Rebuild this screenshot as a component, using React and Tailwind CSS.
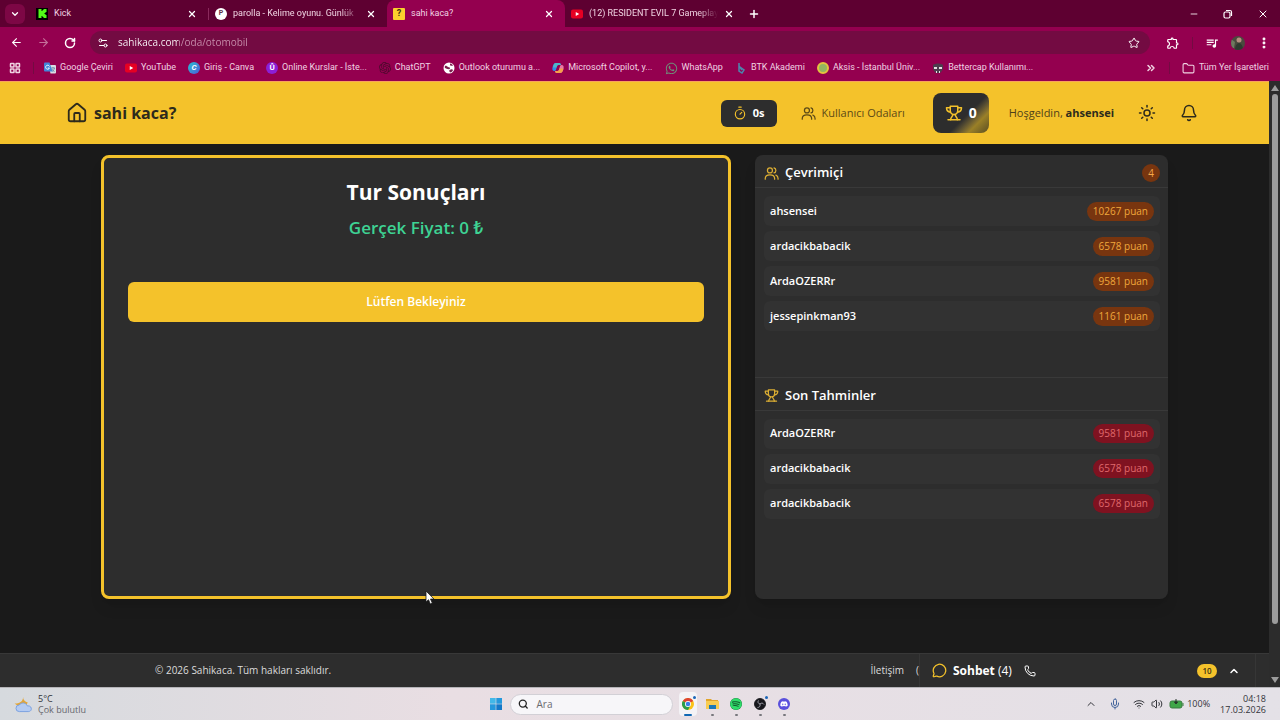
import {
  ArrowLeft, ArrowRight, Bell, ChevronDown, ChevronUp, ChevronsRight, EllipsisVertical, Folder, House,
  LayoutGrid, MessageCircle, Mic, Minus, Phone, Plus, RotateCw, Search, Settings2, Star, Sun, Timer,
  Volume2, Wifi, X,
} from 'lucide-react';
import { FaDiscord, FaSpotify, FaWhatsapp } from 'react-icons/fa';
import { MdOutlineExtension, MdQueueMusic } from 'react-icons/md';
import { SiKick, SiOpenai } from 'react-icons/si';

const PLAYERS = [
  { name: 'ahsensei', points: 10267 },
  { name: 'ardacikbabacik', points: 6578 },
  { name: 'ArdaOZERRr', points: 9581 },
  { name: 'jessepinkman93', points: 1161 },
];

const GUESSES = [
  { name: 'ArdaOZERRr', points: 9581 },
  { name: 'ardacikbabacik', points: 6578 },
  { name: 'ardacikbabacik', points: 6578 },
];

function TrophyIcon({ className }) {
  return (
    <svg viewBox="0 0 24 24" fill="none" stroke="currentColor" strokeWidth="2" strokeLinecap="round" strokeLinejoin="round" className={className}>
      <path d="M7 3h10v6a5 5 0 0 1-10 0z" />
      <path d="M7 5H2c0 3.500 1.500 5.500 5.500 6" />
      <path d="M17 5h5c0 3.500-1.500 5.500-5.500 6" />
      <path d="M10.500 14c0 3-3 3-3 7M13.500 14c0 3 3 3 3 7" />
      <path d="M4 21h16" />
    </svg>
  );
}

function UsersIcon({ className }) {
  return (
    <svg viewBox="0 0 24 24" fill="none" stroke="currentColor" strokeWidth="2" strokeLinecap="round" strokeLinejoin="round" className={className}>
      <circle cx="9.500" cy="7" r="4" />
      <path d="M2 21v-1c0-4 3-6 7.500-6s7.500 2 7.500 6v1" />
      <path d="M16 3c2 .500 3 2 3 4s-1 3.500-3 4" />
      <path d="M19 14.500c2.200.900 3.500 2.800 3.500 5.500v1" />
    </svg>
  );
}

function YoutubeIcon() {
  return (
    <svg viewBox="0 0 24 24" className="size-3 shrink-0">
      <rect x="0" y="3" width="24" height="18" rx="4" fill="#e60023" />
      <path d="M9.500 8v8l7-4z" fill="#fff" />
    </svg>
  );
}

function TranslateIcon() {
  return (
    <svg viewBox="0 0 24 24" className="size-3 shrink-0">
      <path d="M9 6h13a2 2 0 0 1 2 2v13a2 2 0 0 1-2 2h-9z" fill="#d9dce3" />
      <path d="M14 12h8M18 10v2M21 12c-1 4-3 6-5 7M16 14c1 3 3 4 5 5" stroke="#5f7f9f" strokeWidth="1.500" fill="none" />
      <path d="M2 1h9l6 18H2a2 2 0 0 1-2-2V3a2 2 0 0 1 2-2z" fill="#4285d8" />
      <path d="M11 9a4 4 0 1 0 0 3H7.500" stroke="#fff" strokeWidth="1.800" fill="none" />
    </svg>
  );
}

function CopilotIcon() {
  return (
    <svg viewBox="0 0 24 24" className="size-3 shrink-0">
      <path d="M8 2h7c2 0 2 2 3 4h-5c-3 0-3 3-4 6s-1 6-4 6c-4 0-5-3-4-7C2 6 4 2 8 2z" fill="#2f8fe8" />
      <path d="M8 2h7c2 0 2 2 3 4h-5c-3 0-3 2-4 5H2c1-5 2-9 6-9z" fill="#4fb8c8" />
      <path d="M16 22H9c-2 0-2-2-3-4h5c3 0 3-3 4-6s1-6 4-6c4 0 5 3 4 7-1 5-3 9-7 9z" fill="#e879a8" />
      <path d="M16 22H9c-2 0-2-2-3-4h5c3 0 3-2 4-5h8c-1 5-3 9-7 9z" fill="#f5a04a" />
    </svg>
  );
}

function ChromeIcon() {
  return (
    <svg viewBox="0 0 24 24" className="size-3">
      <circle cx="12" cy="12" r="12" fill="#fbc116" />
      <path d="M12 12 1.600 6A12 12 0 0 1 22.400 6z" fill="#dd4334" />
      <path d="M12 12 1.600 6A12 12 0 0 0 12 24l5-9z" fill="#2a9d4d" />
      <circle cx="12" cy="12" r="6" fill="#fff" />
      <circle cx="12" cy="12" r="4.500" fill="#3b7de8" />
    </svg>
  );
}

function GlobeIcon() {
  return (
    <svg viewBox="0 0 24 24" className="size-3 shrink-0">
      <circle cx="12" cy="12" r="11" fill="#fff" />
      <path d="M4 8c3-1 4 1 6 2s5 0 4 3-5 1-8 0-3-3-2-5zM14 3c3 0 5 2 6 4-2 1-5 1-6-1zM13 16c3-2 6-2 7 0-1 3-3 4-5 5-2-1-3-3-2-5z" fill="#7a1d4c" />
    </svg>
  );
}

function ObsIcon() {
  return (
    <svg viewBox="0 0 24 24" className="size-3" fill="none" stroke="#a9a9b2" strokeWidth="1.800">
      <circle cx="12" cy="12" r="11" fill="#17171c" stroke="#17171c" />
      <path d="M12 12c-4-1-5-4-3-7M12 12c3-3 6-2 8 1M12 12c1 4-1 7-5 7" />
    </svg>
  );
}

function Bookmark({ icon, children }) {
  return (
    <a href="#" className="flex shrink-0 items-center gap-1">
      {icon}
      <span className="whitespace-nowrap">{children}</span>
    </a>
  );
}

function Tab({ icon, title, active, last }) {
  return (
    <div className={`flex h-[27px] w-[178px] items-center gap-[6px] pl-[6px] ${last ? 'pr-[9px]' : 'pr-[11px]'} ${active ? 'rounded-t-lg bg-[#94004f]' : ''}`}>
      {icon}
      <span className={`flex-1 whitespace-nowrap ${title.length > 12 ? 'mask-r-from-85%' : ''}`}>{title}</span>
      <button aria-label="Sekmeyi kapat" className="text-white">
        <X className="size-[10px]" strokeWidth={3} />
      </button>
      {last && <span className="h-3 w-px bg-[#8a2a5c]" />}
    </div>
  );
}

function BrowserChrome() {
  return (
    <div className="bg-[#94004f] font-[Roboto,'Open_Sans',sans-serif] text-[9px] text-[#f0d3e2]">
      <div className="flex h-[27px] items-center bg-[#5e0031]">
        <button aria-label="Sekme ara" className="mr-[5px] ml-[5px] flex size-5 items-center justify-center rounded-md bg-[#7d0745] text-white">
          <ChevronDown className="size-[10px]" strokeWidth={3} />
        </button>
        <Tab icon={<span className="flex size-3 shrink-0 items-center justify-center bg-black text-[#53fc18]"><SiKick className="size-[9px]" /></span>} title="Kick" />
        <span className="h-3 w-px bg-[#8a2a5c]" />
        <Tab icon={<span className="flex size-3 shrink-0 items-center justify-center rounded-full bg-white text-[7px] font-bold text-[#5e3048]">P</span>} title="parolla - Kelime oyunu. Günlük" />
        <Tab active icon={<span className="flex size-3 shrink-0 items-center justify-center rounded-[1px] bg-[#fbd02d] text-[9px] font-bold text-[#3c3210]">?</span>} title="sahi kaca?" />
        <Tab icon={<YoutubeIcon />} title="(12) RESIDENT EVIL 7 Gameplay" last />
        <button aria-label="Yeni sekme" className="ml-[5px] text-white">
          <Plus className="size-3" strokeWidth={3} />
        </button>
        <div className="ml-auto flex items-center gap-6 pr-[11px] text-white">
          <button aria-label="Küçült"><Minus className="size-[10px]" strokeWidth={2} /></button>
          <button aria-label="Geri yükle">
            <svg viewBox="0 0 10 10" className="size-[10px]" fill="none" stroke="currentColor" strokeWidth="1.200">
              <rect x="1" y="3" width="6" height="6" rx="1.500" />
              <path d="M3 1.500h4A1.500 1.500 0 0 1 8.500 3v4" />
            </svg>
          </button>
          <button aria-label="Kapat"><X className="size-3" strokeWidth={2} /></button>
        </div>
      </div>

      <div className="flex h-[31px] items-center pr-[9px] pl-[10px] text-white">
        <div className="flex items-center gap-[14px]">
          <button aria-label="Geri"><ArrowLeft className="size-[13px]" strokeWidth={2} /></button>
          <button aria-label="İleri" className="text-[#c4709a]"><ArrowRight className="size-[13px]" strokeWidth={2} /></button>
          <button aria-label="Yenile"><RotateCw className="size-3" strokeWidth={3} /></button>
        </div>
        <div className="ml-[14px] flex h-[23px] flex-1 items-center gap-[9px] rounded-full bg-[#730b42] pr-[10px] pl-[7px]">
          <Settings2 className="size-3" strokeWidth={2} />
          <input
            aria-label="Adres çubuğu"
            defaultValue="sahikaca.com/oda/otomobil"
            className="flex-1 bg-linear-to-r from-white from-[60px] to-[#c992ae] to-[60px] bg-clip-text font-['Open_Sans',sans-serif] text-[10px] text-transparent outline-none"
          />
          <button aria-label="Yer işareti ekle"><Star className="size-3" strokeWidth={2} /></button>
        </div>
        <div className="ml-4 flex items-center gap-3">
          <button aria-label="Uzantılar"><MdOutlineExtension className="size-[14px]" /></button>
          <span className="h-3 w-px bg-[#730b42]" />
          <button aria-label="Medya"><MdQueueMusic className="size-[14px]" /></button>
          <button aria-label="Profil" className="size-[14px] overflow-hidden rounded-full bg-[#4a4a3e]">
            <svg viewBox="0 0 14 14">
              <circle cx="8" cy="4" r="2.500" fill="#b58f80" />
              <path d="M4 14c0-4 2-7 4-7s4 3 4 7z" fill="#2d3a2e" />
              <path d="M0 3l4 3-1 6H0z" fill="#6d7a5e" />
            </svg>
          </button>
          <button aria-label="Menü"><EllipsisVertical className="size-[14px]" strokeWidth={3} /></button>
        </div>
      </div>

      <nav className="flex h-[23px] items-center gap-3 pr-[11px] pb-[3px] pl-[9px]">
        <button aria-label="Uygulamalar" className="text-[#f0d3e2]"><LayoutGrid className="size-3" strokeWidth={3} /></button>
        <span className="-mr-[2px] h-3 w-px bg-[#730b42]" />
        <Bookmark icon={<TranslateIcon />}>Google Çeviri</Bookmark>
        <Bookmark icon={<YoutubeIcon />}>YouTube</Bookmark>
        <Bookmark icon={<span className="flex size-3 items-center justify-center rounded-full bg-linear-to-br from-[#19c2cf] to-[#4a55d8] text-[8px] font-bold text-white italic">C</span>}>Giriş - Canva</Bookmark>
        <Bookmark icon={<span className="flex size-3 items-center justify-center rounded-full bg-[#8b1fd6] text-[8px] font-bold text-white">Û</span>}>Online Kurslar - İste...</Bookmark>
        <Bookmark icon={<SiOpenai className="size-3 text-[#4b0a2c]" />}>ChatGPT</Bookmark>
        <Bookmark icon={<GlobeIcon />}>Outlook oturumu a...</Bookmark>
        <Bookmark icon={<CopilotIcon />}>Microsoft Copilot, y...</Bookmark>
        <Bookmark icon={<FaWhatsapp className="size-[13px] text-[#6f8f7a]" />}>WhatsApp</Bookmark>
        <Bookmark
          icon={(
            <svg viewBox="0 0 12 12" className="size-3" fill="none" stroke="#4c86ad" strokeWidth="1.500">
              <path d="M4 1v8l3 2 2-3-4-3M4 4l3 4" />
            </svg>
          )}
        >
          BTK Akademi
        </Bookmark>
        <Bookmark icon={<span className="size-3 rounded-full border-2 border-[#e3c33e] bg-[#93b560]" />}>Aksis - İstanbul Üniv...</Bookmark>
        <Bookmark
          icon={(
            <svg viewBox="0 0 12 12" className="size-3">
              <path d="M1 3c3-2 7-2 10 0v4c-1 2-2 3-3 4H4C3 10 2 9 1 7z" fill="#4d3d4e" />
              <path d="M2 5h3v2H2zM7 5h3v2H7zM4 9h1v2H4zM7 9h1v2H7z" fill="#e7dfe5" />
            </svg>
          )}
        >
          Bettercap Kullanımı...
        </Bookmark>
        <div className="ml-auto flex items-center gap-3">
          <button aria-label="Diğer yer işaretleri"><ChevronsRight className="size-3" strokeWidth={3} /></button>
          <span className="h-3 w-px bg-[#730b42]" />
          <Bookmark icon={<Folder className="size-[13px]" strokeWidth={2} />}>Tüm Yer İşaretleri</Bookmark>
        </div>
      </nav>
    </div>
  );
}

function SiteHeader() {
  return (
    <header className="border-t border-[#f9a25c] bg-[#f4c22b] text-[#2d2a1c]">
      <div className="mx-auto flex h-[62px] max-w-[1137px] items-center justify-between">
        <a href="#" className="flex items-center gap-[6px] text-base font-bold">
          <House className="size-[22px]" strokeWidth={2} />
          sahi kaca?
        </a>
        <div className="flex items-center text-[11px]">
          <div className="flex h-[27px] items-center gap-[6px] rounded-md bg-[#2d2d2d] px-3 font-bold text-white">
            <Timer className="size-[14px] text-[#f4c22b]" strokeWidth={2} />
            0s
          </div>
          <a href="#" className="ml-6 flex items-center gap-[6px] text-[#5c4a17]">
            <UsersIcon className="size-[15px]" />
            Kullanıcı Odaları
          </a>
          <button className="ml-7 flex h-10 items-center gap-[6px] rounded-lg bg-linear-135 from-[#2d2d2d] from-58% via-[#9a8027] via-78% to-[#5a4e22] px-3 text-sm font-bold text-white">
            <TrophyIcon className="size-[18px] text-[#f4c22b]" />
            0
          </button>
          <span className="ml-5 text-[#4f4119]">
            Hoşgeldin, <b className="text-[#2d2a1c]">ahsensei</b>
          </span>
          <button aria-label="Tema" className="ml-6"><Sun className="size-[18px]" strokeWidth={2} /></button>
          <button aria-label="Bildirimler" className="mr-[5px] ml-6"><Bell className="size-[18px]" strokeWidth={2} /></button>
        </div>
      </div>
    </header>
  );
}

function PlayerList({ players, badgeClass }) {
  return (
    <ul className="flex flex-col gap-[5px] py-2 pr-2 pl-[9px]">
      {players.map((p, i) => (
        <li key={i} className="flex h-[30px] items-center justify-between rounded-md bg-[#323232] px-[6px]">
          <span className="text-[11px] font-semibold text-white">{p.name}</span>
          <span className={`flex h-[19px] items-center rounded-full px-[6px] text-[10px] ${badgeClass}`}>{p.points} puan</span>
        </li>
      ))}
    </ul>
  );
}

function SectionTitle({ icon, children, count }) {
  return (
    <div className="flex h-[33px] items-center gap-[6px] border-b border-[#393939] pt-1 pr-2 pl-[9px]">
      {icon}
      <h2 className="text-[13px] font-semibold text-white">{children}</h2>
      {count && (
        <span className="ml-auto flex size-[18px] items-center justify-center rounded-full bg-[#78350f] text-[10px] text-[#f5a84a]">{count}</span>
      )}
    </div>
  );
}

function SiteFooter() {
  return (
    <footer className="flex h-[34px] items-stretch border-t border-[#383838] bg-[#2d2d2d] pr-[13px] pl-[155px] text-[10px] text-[#dcdcdc]">
      <p className="flex items-center">© 2026 Sahikaca. Tüm hakları saklıdır.</p>
      <div className="ml-auto flex items-center gap-3">
        <a href="#">İletişim</a>
        <a href="#" aria-label="Gizlilik">(</a>
      </div>
      <section className="flex w-[337px] items-center border-x border-[#363636] pr-[15px] pl-3">
        <MessageCircle className="size-[15px] text-[#f4c22b]" strokeWidth={2} />
        <h2 className="ml-[6px] text-xs font-bold text-white">
          Sohbet <span className="font-normal">(4)</span>
        </h2>
        <button aria-label="Ara" className="ml-3 text-white"><Phone className="size-3" strokeWidth={2} /></button>
        <span className="ml-auto flex h-[14px] w-5 items-center justify-center rounded-full bg-[#f4c22b] text-[8px] font-semibold text-[#3a2f10]">10</span>
        <button aria-label="Sohbeti aç" className="ml-[11px] text-white"><ChevronUp className="size-3" strokeWidth={3} /></button>
      </section>
    </footer>
  );
}

function TaskbarApp({ label, running, active, notify, children }) {
  return (
    <button aria-label={label} className={`relative flex h-6 w-[18px] items-center justify-center rounded-sm ${active ? 'bg-[#f4f3f6]' : ''}`}>
      {children}
      {notify && <span className="absolute top-1 right-px size-[3px] rounded-full bg-[#1b66b8]" />}
      {active && <span className="absolute bottom-0 h-[2px] w-2 rounded-full bg-[#1068b4]" />}
      {running && <span className="absolute bottom-0 h-[2px] w-[3px] rounded-full bg-[#77777c]" />}
    </button>
  );
}

function Taskbar() {
  return (
    <div className="grid h-[33px] grid-cols-[1fr_auto_1fr] items-center border-t border-[#b5b4b8] bg-linear-to-r from-[#d6dade] via-[#e9dee3] via-35% to-[#e4e1e7] text-[9px] text-[#33343a]">
      <div className="flex items-center gap-1 pl-[14px]">
        <svg viewBox="0 0 20 18" className="h-[17px] w-5">
          <path d="M9 1c0 3 2 5 5 6l-3 5-8-2-3-2c5 0 9-2 9-7z" fill="#e2a63a" />
          <path d="M5 16.500a3.500 3.500 0 0 1 0-7c2-3 7-3 8.500 1 5-1 6 6 1 6z" fill="#b4cbf2" stroke="#789fe0" />
        </svg>
        <div className="leading-[11px]">
          <div>5°C</div>
          <div className="text-[#66676d]">Çok bulutlu</div>
        </div>
      </div>

      <div className="flex items-center gap-[6px] pl-[3px]">
        <button aria-label="Başlat" className="mr-[2px]">
          <svg viewBox="0 0 12 12" className="size-3">
            <path d="M0 0h5.700v5.700H0z" fill="#42b8e8" />
            <path d="M6.300 0H12v5.700H6.300zM0 6.300h5.700V12H0z" fill="#2498dc" />
            <path d="M6.300 6.300H12V12H6.300z" fill="#1478c8" />
          </svg>
        </button>
        <label className="flex h-[21px] w-[163px] items-center gap-2 rounded-full border border-[#d2d0d6] bg-[#f7f6f9] px-[7px]">
          <Search className="size-3 text-[#222]" strokeWidth={3} />
          <input aria-label="Ara" placeholder="Ara" className="w-full text-[10px] outline-none placeholder:text-[#6a6a70]" />
        </label>
        <TaskbarApp label="Chrome" active notify><ChromeIcon /></TaskbarApp>
        <TaskbarApp label="Dosya Gezgini" running>
          <svg viewBox="0 0 13 12" className="h-3 w-[13px]">
            <path d="M0 1h5l1 1h6v9H0z" fill="#e2a52a" />
            <path d="M0 3h13v8H0z" fill="#f8cc52" />
            <path d="M3 7h7v4H3z" fill="#1c78b8" />
          </svg>
        </TaskbarApp>
        <TaskbarApp label="Spotify" running><span className="rounded-full bg-[#145a30]"><FaSpotify className="size-3 text-[#2fdc6a]" /></span></TaskbarApp>
        <TaskbarApp label="OBS" running notify><ObsIcon /></TaskbarApp>
        <TaskbarApp label="Discord" running>
          <span className="flex size-3 items-center justify-center rounded-full bg-[#5a50dc] text-white"><FaDiscord className="size-2" /></span>
        </TaskbarApp>
      </div>

      <div className="flex items-center justify-end pr-[14px]">
        <button aria-label="Gizli simgeler"><ChevronUp className="size-3" strokeWidth={2} /></button>
        <Mic className="ml-3 size-3 text-[#44659c]" strokeWidth={2} />
        <Wifi className="ml-3 size-3" strokeWidth={2} />
        <Volume2 className="ml-[6px] size-3" strokeWidth={2} />
        <svg viewBox="0 0 15 10" className="ml-[6px] h-[10px] w-[15px]">
          <rect x="1" y="2" width="12" height="7" rx="2" fill="#3fa648" stroke="#3a7a40" />
          <path d="M14 4v3" stroke="#3a7a40" />
          <path d="M7 0v3M5.500 3h3L7 5z" stroke="#26352a" fill="#26352a" />
        </svg>
        <span className="ml-[3px]">100%</span>
        <div className="ml-[10px] text-right leading-[11px]">
          <div>04:18</div>
          <div>17.03.2026</div>
        </div>
      </div>
    </div>
  );
}

function Scrollbar() {
  return (
    <div className="flex w-[11px] shrink-0 flex-col items-center justify-between bg-[#2c2c2c] py-1">
      <svg viewBox="0 0 8 6" className="h-[6px] w-2"><path d="M4 0l4 6H0z" fill="#9c9c9c" /></svg>
      <div className="mt-[3px] mb-[53px] w-[6px] flex-1 rounded-full bg-[#9c9c9c]" />
      <svg viewBox="0 0 8 6" className="h-[6px] w-2"><path d="M4 6L0 0h8z" fill="#9c9c9c" /></svg>
    </div>
  );
}

function Cursor() {
  return (
    <svg viewBox="0 0 10 15" className="pointer-events-none absolute top-[590px] left-[425px] h-[15px] w-[10px]">
      <path d="M1 1v11l2.500-2.300L5.300 14l2-.900-1.800-4H9z" fill="#fff" stroke="#1a1a1a" strokeWidth=".8" strokeLinejoin="round" />
    </svg>
  );
}

export default function App() {
  return (
    <div className="relative flex min-h-screen flex-col bg-[#1a1a1a] font-['Open_Sans','Noto_Sans',sans-serif]">
      <BrowserChrome />
      <div className="flex flex-1">
        <div className="flex min-w-0 flex-1 flex-col">
          <SiteHeader />
          <main className="mx-auto grid w-full max-w-[1067px] flex-1 grid-cols-[630fr_413fr] gap-6 pt-[11px] pb-[54px]">
            <section className="flex flex-col rounded-lg border-[3px] border-[#f4c22b] bg-[#2d2d2d] px-6 pt-5 text-center shadow-lg">
              <h1 className="text-[21px] leading-7 font-bold text-white">Tur Sonuçları</h1>
              <p className="mt-2 text-[17px] leading-7 font-semibold text-[#3ed394]">Gerçek Fiyat: 0 ₺</p>
              <button className="mt-10 h-10 rounded-md bg-[#f4c22b] text-xs font-semibold text-white">Lütfen Bekleyiniz</button>
            </section>
            <aside className="flex flex-col rounded-lg bg-[#2d2d2d] shadow-lg">
              <section className="flex-1">
                <SectionTitle icon={<UsersIcon className="size-[15px] text-[#dcae33]" />} count={4}>Çevrimiçi</SectionTitle>
                <PlayerList players={PLAYERS} badgeClass="bg-[#78350f] text-[#f0a83c]" />
              </section>
              <section className="flex-1 border-t border-[#393939]">
                <SectionTitle icon={<TrophyIcon className="size-[15px] text-[#dcae33]" />}>Son Tahminler</SectionTitle>
                <PlayerList players={GUESSES} badgeClass="bg-[#7f1220] text-[#e0696c]" />
              </section>
            </aside>
          </main>
          <SiteFooter />
        </div>
        <Scrollbar />
      </div>
      <Taskbar />
      <Cursor />
    </div>
  );
}
